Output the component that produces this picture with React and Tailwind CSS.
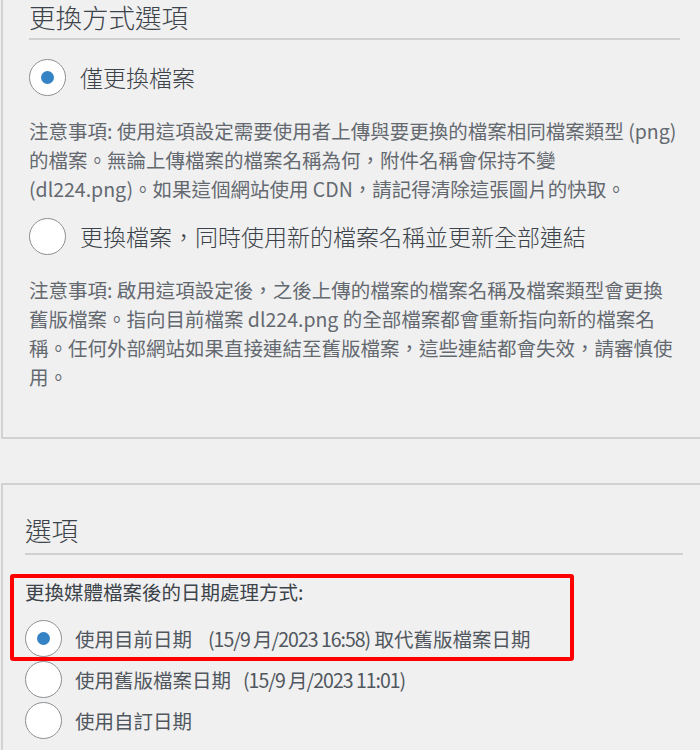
function Radio({ checked }) {
  return (
    <span className="flex h-[37px] w-[37px] shrink-0 items-center justify-center rounded-full border border-[#8c8f94] bg-white">
      {checked && <span className="h-[13px] w-[13px] rounded-full bg-[#3582c4]" />}
    </span>
  );
}

function Note({ lines }) {
  return (
    <p className="text-[19.5px] leading-[29px] text-[#646970]">
      {lines.map((l, i) => (
        <span key={i} className="block whitespace-nowrap">{l}</span>
      ))}
    </p>
  );
}

export default function App() {
  return (
    <div className="relative min-h-[750px] overflow-hidden bg-[#f0f0f0] font-['Noto_Sans_CJK_TC','Noto_Sans',sans-serif]">
      {/* 更換方式選項 */}
      <div className="ml-px w-[720px] border-b-2 border-l-2 border-[#d2d2d2] pb-[46px] pl-[26px] pr-[41px]">
        <h2 className="text-[26.5px] font-light leading-[34px] text-[#3c434a]">更換方式選項</h2>
        <div className="mt-[4px] h-[2px] bg-[#d0d0d0]" />

        <label className="mt-[19px] flex items-center gap-[14px]">
          <Radio checked />
          <span className="text-[23px] font-light text-[#3c434a]">僅更換檔案</span>
        </label>
        <div className="mt-[20px]">
          <Note
            lines={[
              '注意事項: 使用這項設定需要使用者上傳與要更換的檔案相同檔案類型 (png)',
              '的檔案。無論上傳檔案的檔案名稱為何，附件名稱會保持不變',
              '(dl224.png)。如果這個網站使用 CDN，請記得清除這張圖片的快取。',
            ]}
          />
        </div>

        <label className="mt-[15px] flex items-center gap-[14px]">
          <Radio />
          <span className="text-[23px] font-light text-[#3c434a]">更換檔案，同時使用新的檔案名稱並更新全部連結</span>
        </label>
        <div className="mt-[20px]">
          <Note
            lines={[
              '注意事項: 啟用這項設定後，之後上傳的檔案的檔案名稱及檔案類型會更換',
              '舊版檔案。指向目前檔案 dl224.png 的全部檔案都會重新指向新的檔案名',
              '稱。任何外部網站如果直接連結至舊版檔案，這些連結都會失效，請審慎使',
              '用。',
            ]}
          />
        </div>
      </div>

      {/* 選項 */}
      <div className="ml-px mt-[44px] w-[720px] border-l-2 border-t-2 border-[#d2d2d2] pb-[30px] pl-[22px] pr-[38px] pt-[28px]">
        <h2 className="text-[26.5px] font-light leading-[34px] text-[#3c434a]">選項</h2>
        <div className="mt-[6px] h-[2px] bg-[#d0d0d0]" />

        <p className="mt-[22px] text-[19.5px] leading-[29px] text-[#3c434a]">更換媒體檔案後的日期處理方式:</p>

        <div className="mt-[14px] flex flex-col gap-[4px] text-[19.5px] text-[#50575e]">
          <label className="flex items-center gap-[13px]">
            <Radio checked />
            <span>
              使用目前日期<span className="ml-[16px] tracking-[-1px]">(15/9 月/2023 16:58)</span> 取代舊版檔案日期
            </span>
          </label>
          <label className="flex items-center gap-[13px]">
            <Radio />
            <span>
              使用舊版檔案日期<span className="ml-[12px] tracking-[-1px]">(15/9 月/2023 11:01)</span>
            </span>
          </label>
          <label className="flex items-center gap-[13px]">
            <Radio />
            <span>使用自訂日期</span>
          </label>
        </div>
      </div>

      {/* highlight */}
      <div className="pointer-events-none absolute left-[10px] top-[574px] h-[87px] w-[564px] rounded-[3px] border-[4.5px] border-[#ff0000]" />
    </div>
  );
}
